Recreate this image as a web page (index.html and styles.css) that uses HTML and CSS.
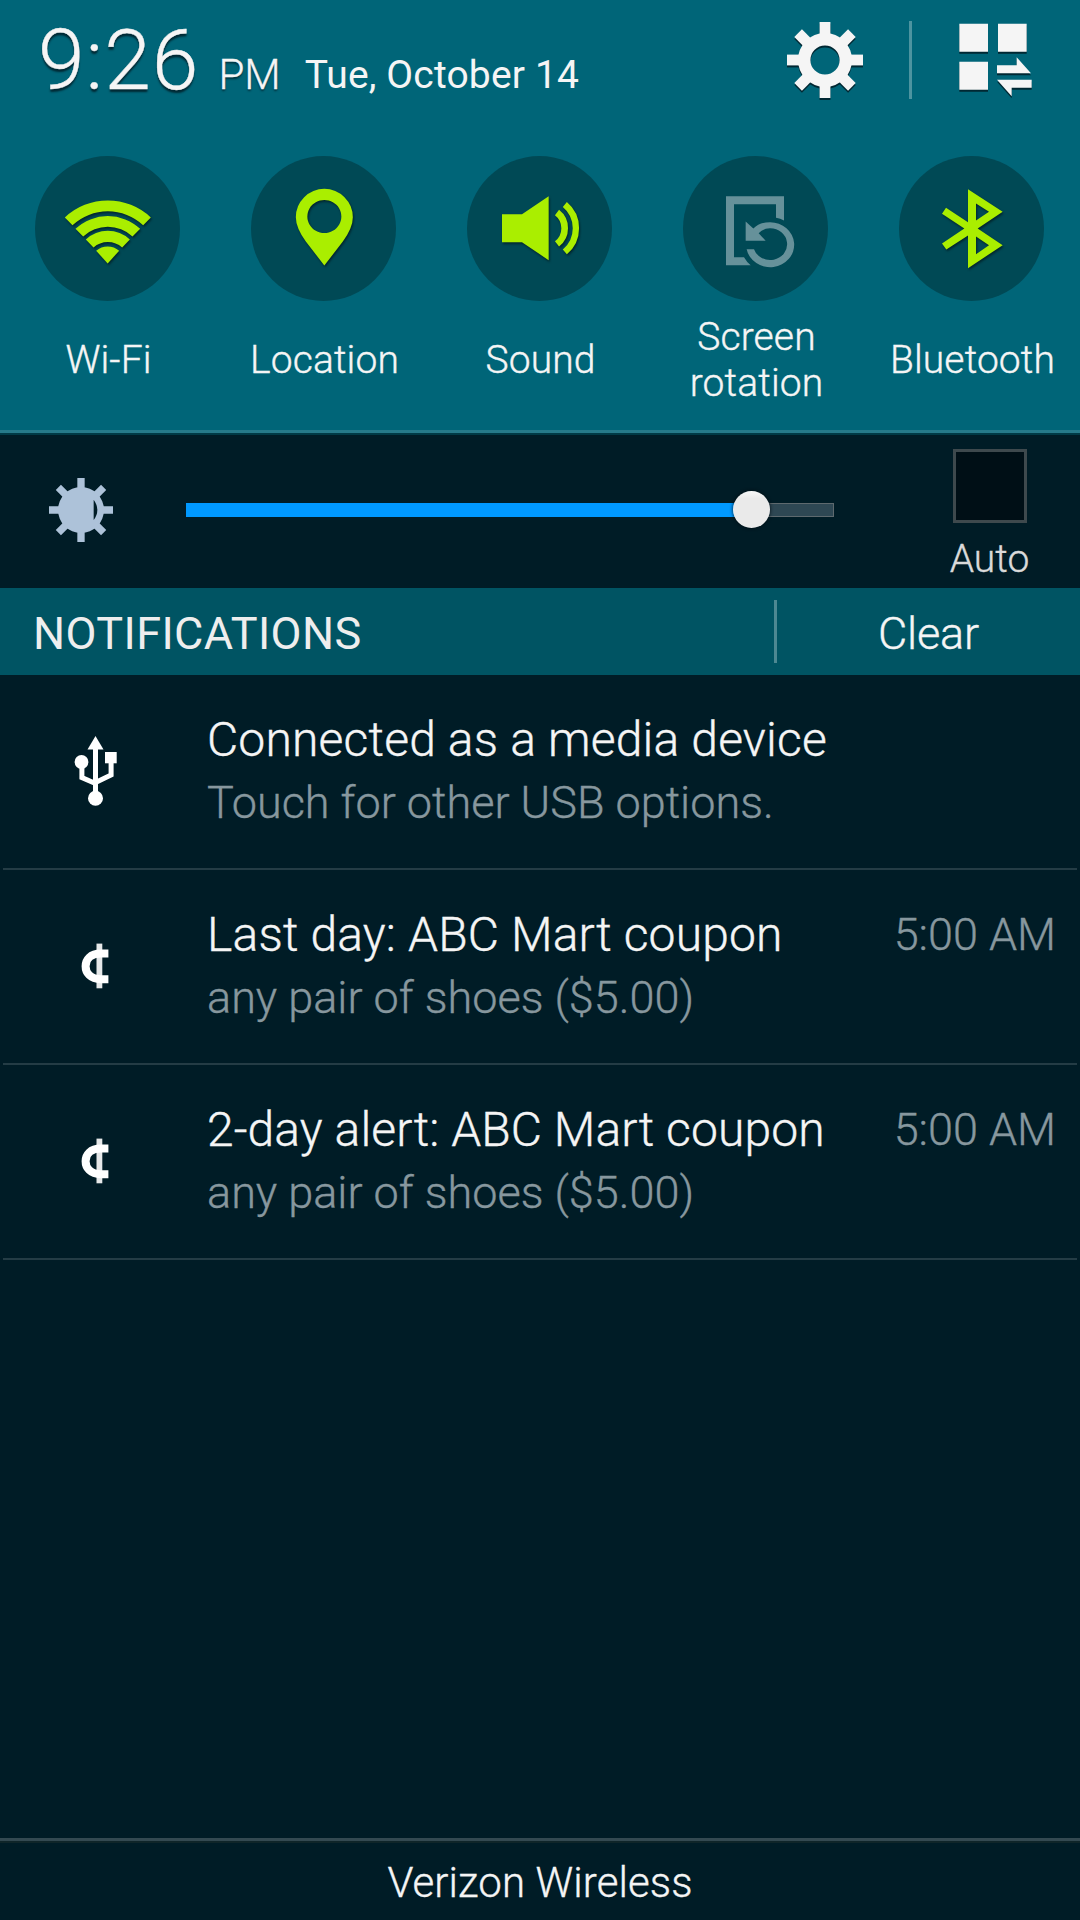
FILE: index.html
```html
<!DOCTYPE html>
<html lang="en">
<head>
<meta charset="utf-8">
<title>Notifications</title>
<link rel="stylesheet" href="styles.css">
</head>
<body>
<div class="shade">
  <section class="panel">
    <header class="status">
      <div class="clock"><span class="time">9:26</span><span class="ampm">PM</span><span class="date">Tue, October 14</span></div>
      <div class="tools">
        <svg class="gear" viewBox="-40 -40 80 80" fill="#f5f5f5">
          <circle r="20.8" fill="none" stroke="#f5f5f5" stroke-width="12.4"/>
          <g id="teeth">
            <rect x="-5.4" y="-38" width="10.8" height="13"/>
            <rect x="-5.4" y="25" width="10.8" height="13"/>
            <rect x="-38" y="-5.4" width="13" height="10.8"/>
            <rect x="25" y="-5.4" width="13" height="10.8"/>
          </g>
          <use href="#teeth" transform="rotate(45)"/>
        </svg>
        <span class="tool-divider"></span>
        <svg class="grid" viewBox="597 70 222 222" fill="#f5f5f5">
          <path d="M598 72h86v84h-86zM714 72h86v84h-86zM598 186h86v84h-86z"/>
          <path d="M711 197H770V173L813 221H711zM711 240H815V264H755V290z"/>
        </svg>
      </div>
    </header>
    <div class="toggles">
      <div class="toggle">
        <svg class="disc" viewBox="45.5 47.5 435 435">
          <g class="on">
            <path d="M135 232A188 188 0 0 1 393 232L370 255A156 156 0 0 0 158 255Z"/>
            <path d="M167 266A142 142 0 0 1 361 266L338 289A109 109 0 0 0 190 289Z"/>
            <path d="M198 298A97 97 0 0 1 330 298L307 322A64 64 0 0 0 221 322Z"/>
            <path d="M229 332A52 52 0 0 1 298 332L263.500 370Z"/>
          </g>
        </svg>
        <div class="label">Wi-Fi</div>
      </div>
      <div class="toggle">
        <svg class="disc" viewBox="693.5 47.5 435 435">
          <g class="on">
            <path fill-rule="evenodd" d="M913.500 376L858 304Q828 262 828 231A85.500 85 0 0 1 999 231Q999 262 969 304ZM913.500 179.500a51 49.500 0 1 0 .1 0Z"/>
          </g>
        </svg>
        <div class="label">Location</div>
      </div>
      <div class="toggle">
        <svg class="disc" viewBox="81 47.5 435 435">
          <g class="on">
            <path d="M186 222H246L326 168V360L246 306H186Z"/>
            <path class="wave" stroke-width="20" d="M351 217A59.500 59.500 0 0 1 351 311"/>
            <path class="wave" stroke-width="19" d="M374.500 193A92.500 92.500 0 0 1 374.500 335"/>
          </g>
        </svg>
        <div class="label">Sound</div>
      </div>
      <div class="toggle">
        <svg class="disc" viewBox="729 47.5 435 435">
          <g class="off">
            <path d="M1032 241V168H858V375H932Q920 365 912 351H882V192H1008V233Q1021 235 1032 241Z"/>
            <path d="M917 244L940 265Q960 246 990 246A72 67.500 0 1 1 920 327H942A51 47.500 0 1 0 990 264.500Q970 265 956 279L977 302H917Z"/>
          </g>
        </svg>
        <div class="label">Screen<br>rotation</div>
      </div>
      <div class="toggle">
        <svg class="disc" viewBox="237 47.5 435 435">
          <g class="on">
            <path fill-rule="evenodd" d="M444 147L548 215L473 265L548 315L444 384V286L379 328L366 310L433 265L366 221L378 203L444 246ZM468 190V241L507 215ZM468 289V342L507 315Z"/>
          </g>
        </svg>
        <div class="label">Bluetooth</div>
      </div>
    </div>
  </section>

  <section class="brightness">
    <svg class="sun" viewBox="-96 -96 192 192">
      <path fill-rule="evenodd" d="M0-69A69 69 0 1 1 0 69A69 69 0 1 1 0-69ZM38-31V30Q49 16 49 0Q49-16 38-31Z"/>
      <path id="rays" d="M-11-96H11V-60H-11ZM-11 60H11V96H-11ZM-96-11H-60V11H-96ZM60-11H96V11H60Z"/>
      <use href="#rays" transform="rotate(45)"/>
    </svg>
    <div class="slider">
      <div class="fill" style="width: 565px"></div>
      <div class="thumb"></div>
      <div class="rest"></div>
    </div>
    <div class="auto">
      <div class="checkbox"></div>
      <div class="auto-label">Auto</div>
    </div>
  </section>

  <section class="heading">
    <div class="heading-title">NOTIFICATIONS</div>
    <div class="heading-divider"></div>
    <div class="clear">Clear</div>
  </section>

  <main class="list">
    <article class="item">
      <div class="item-icon">
        <svg width="48" height="76" viewBox="72 733 48 76" fill="#fff">
          <path d="M95.500 736L103.500 749.500H87.500Z"/>
          <circle cx="81.500" cy="762" r="6.900"/>
          <circle cx="95.500" cy="798.300" r="7.500"/>
          <path d="M105 752h11.700v11.300H105z"/>
          <path d="M95.500 747V796M81.900 765V777.500L95.500 783.500M111.100 762V775L95.500 782.500" fill="none" stroke="#fff" stroke-width="5"/>
        </svg>
      </div>
      <div class="item-text">
        <div class="item-title">Connected as a media device</div>
        <div class="item-sub">Touch for other USB options.</div>
      </div>
    </article>
    <article class="item">
      <div class="item-icon">
        <svg class="cent" width="48" height="76" viewBox="72 928 48 76" fill="none" stroke="#fff">
          <path stroke-width="8" d="M108.400 953.600H101C90 953.600 85.600 960 85.600 966.200S90 979.200 101 979.200H108.400"/>
          <path stroke-width="5.800" stroke-opacity=".9" d="M99.400 943.600V988.300"/>
        </svg>
      </div>
      <div class="item-text">
        <div class="item-title">Last day: ABC Mart coupon</div>
        <div class="item-sub">any pair of shoes ($5.00)</div>
      </div>
      <div class="item-time">5:00 AM</div>
    </article>
    <article class="item">
      <div class="item-icon">
        <svg class="cent" width="48" height="76" viewBox="72 928 48 76" fill="none" stroke="#fff">
          <path stroke-width="8" d="M108.400 953.600H101C90 953.600 85.600 960 85.600 966.200S90 979.200 101 979.200H108.400"/>
          <path stroke-width="5.800" stroke-opacity=".9" d="M99.400 943.600V988.300"/>
        </svg>
      </div>
      <div class="item-text">
        <div class="item-title item-title-tight">2-day alert: ABC Mart coupon</div>
        <div class="item-sub">any pair of shoes ($5.00)</div>
      </div>
      <div class="item-time">5:00 AM</div>
    </article>
  </main>

  <footer class="carrier">Verizon Wireless</footer>
</div>
</body>
</html>
```

FILE: styles.css
```css
* { box-sizing: border-box; }

body {
  margin: 0;
  background: #001c26;
  color: #f5f5f5;
  font-family: Roboto, "Liberation Sans", sans-serif;
  font-weight: 300;
  -webkit-text-stroke: .35px currentColor;
}

svg { display: block; flex: none; }

.shade {
  display: flex;
  flex-direction: column;
  width: 1080px;
  height: 1920px;
  overflow: hidden;
}

/* Quick panel */
.panel {
  height: 435px;
  flex: none;
  background: #006578;
  border-bottom: 2px solid #003a46;
  box-shadow: inset 0 -3px #267a8a;
}

.status {
  display: flex;
  justify-content: space-between;
  height: 120px;
  padding: 0 47px 0 38px;
}

.clock { line-height: 122px; white-space: nowrap; }
.time {
  font-size: 84px;
  letter-spacing: 1px;
  text-shadow: 0 3px 2px rgba(0, 20, 28, .75);
}
.ampm {
  margin-left: 19px;
  font-size: 42px;
  text-shadow: 0 2px 2px rgba(0, 20, 28, .65);
}
.date {
  margin-left: 24px;
  font-size: 39px;
  font-weight: 400;
  letter-spacing: .15px;
  vertical-align: 1px;
  -webkit-text-stroke: 0;
}

.tools { display: flex; align-items: flex-start; }
.tools svg { filter: drop-shadow(0 2px 0 rgba(0, 25, 34, .8)); }
.gear { width: 80px; height: 80px; margin-top: 20px; }
.tool-divider {
  width: 3px;
  height: 78px;
  margin: 21px 47px 0 44px;
  background: #4d94a0;
}
.grid { width: 74px; height: 74px; margin-top: 23px; }

.toggles {
  display: grid;
  grid-template-columns: repeat(5, 216px);
  padding-top: 36px;
}
.toggle { display: flex; flex-direction: column; align-items: center; }
.disc {
  width: 145px;
  height: 145px;
  margin-right: 1px;
  border-radius: 50%;
  background: #004955;
}
.on { fill: #aaee00; filter: drop-shadow(3px 5px 3px rgba(0, 20, 25, .7)); }
.off { fill: #66919a; }
.wave { fill: none; stroke: #aaee00; }
.label {
  display: flex;
  align-items: center;
  height: 92px;
  margin: 13px 0 0 1px;
  font-size: 39px;
  line-height: 46px;
  letter-spacing: .1px;
  text-align: center;
}

/* Brightness */
.brightness {
  display: flex;
  height: 153px;
  flex: none;
  padding: 14px 45px 0 49px;
}
.sun { width: 64px; height: 64px; margin-top: 29px; fill: #adc2d9; }
.slider {
  display: flex;
  align-items: center;
  width: 648px;
  height: 37px;
  margin: 42px 0 0 73px;
}
.fill { height: 14px; background: #0099ff; flex: none; }
.thumb {
  width: 37px;
  height: 37px;
  margin: 0 -18px;
  flex: none;
  z-index: 1;
  border-radius: 50%;
  background: linear-gradient(#f8f8f8, #eaeaea 20%);
  box-shadow: 0 0 3px 1px rgba(0, 12, 16, .6);
}
.rest {
  flex: 1;
  height: 14px;
  border: 1px solid #5e696e;
  background: #2e4753;
}
.auto {
  display: flex;
  flex-direction: column;
  align-items: center;
  width: 90px;
  margin-left: 111px;
}
.checkbox {
  width: 74px;
  height: 74px;
  border: 3px solid #3e494d;
  background: #000f16;
}
.auto-label {
  margin: 13px 1px 0 0;
  font-size: 39px;
  line-height: 46px;
  color: #dadada;
}

/* Section heading */
.heading {
  display: flex;
  height: 87px;
  flex: none;
  background: #005463;
  font-size: 45px;
  line-height: 91px;
}
.heading-title {
  width: 774px;
  padding-left: 33px;
  font-weight: 400;
  letter-spacing: .4px;
  color: #eee;
  -webkit-text-stroke: 0;
}
.heading-divider { width: 3px; height: 63px; margin-top: 12px; background: #4d8892; }
.clear { flex: 1; text-align: center; letter-spacing: -.2px; }

/* Notifications */
.list { flex: 1; padding: 0 3px; }
.item {
  display: flex;
  height: 195px;
  padding: 35px 21px 0 0;
  border-bottom: 2px solid #243c45;
}
.item-icon { width: 204px; padding: 23px 0 0 69px; }
.item-text { flex: 1; white-space: nowrap; }
.item-title { font-size: 48px; line-height: 60px; letter-spacing: .18px; }
.item-title-tight { letter-spacing: .1px; }
.item-sub { font-size: 45px; line-height: 66px; color: #87979e; }
.item-time { font-size: 45px; line-height: 60px; color: #87979e; }
.cent { filter: blur(.7px); }

/* Carrier */
.carrier {
  height: 82px;
  flex: none;
  padding-top: 2px;
  border-top: 3px solid #334951;
  box-shadow: inset 0 2px #0f2529;
  font-size: 42px;
  line-height: 79px;
  letter-spacing: .1px;
  text-align: center;
}
```
